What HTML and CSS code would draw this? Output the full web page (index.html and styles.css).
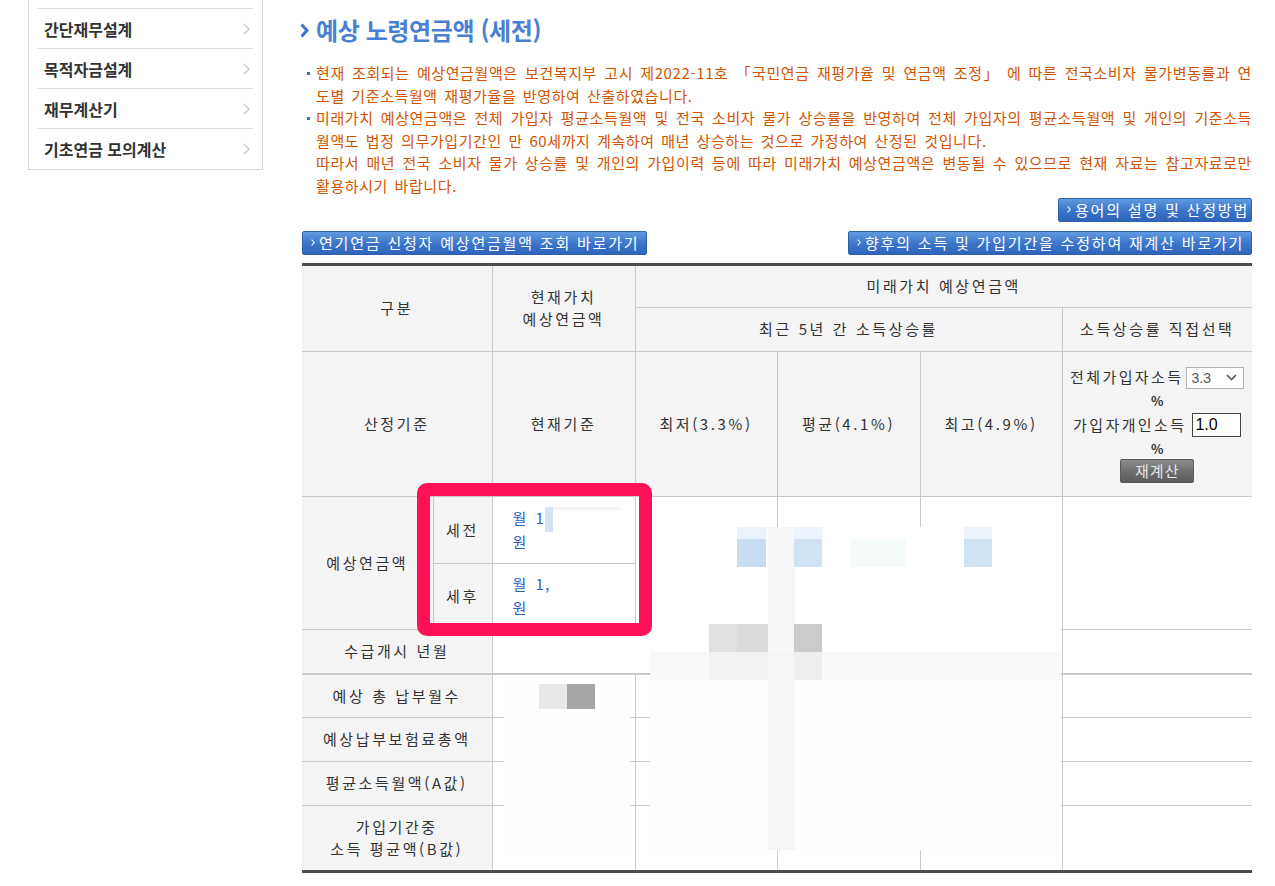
FILE: index.html
```html
<!DOCTYPE html>
<html lang="ko">
<head>
<meta charset="utf-8">
<title>예상 노령연금액 (세전)</title>
<link rel="stylesheet" href="styles.css">
</head>
<body>
<div class="page">
  <aside class="side">
    <a class="side-item">간단재무설계<svg class="side-arr" width="7" height="12" viewBox="0 0 7 12"><polyline points="1,1 6,6 1,11" fill="none" stroke="#c4c4c4" stroke-width="1.2"/></svg></a>
    <a class="side-item">목적자금설계<svg class="side-arr" width="7" height="12" viewBox="0 0 7 12"><polyline points="1,1 6,6 1,11" fill="none" stroke="#c4c4c4" stroke-width="1.2"/></svg></a>
    <a class="side-item">재무계산기<svg class="side-arr" width="7" height="12" viewBox="0 0 7 12"><polyline points="1,1 6,6 1,11" fill="none" stroke="#c4c4c4" stroke-width="1.2"/></svg></a>
    <a class="side-item">기초연금 모의계산<svg class="side-arr" width="7" height="12" viewBox="0 0 7 12"><polyline points="1,1 6,6 1,11" fill="none" stroke="#c4c4c4" stroke-width="1.2"/></svg></a>
  </aside>

  <main class="main">
    <h2 class="title"><svg class="title-arr" width="9" height="15" viewBox="0 0 9 15"><polyline points="1.6,1.6 7,7.5 1.6,13.4" fill="none" stroke="#3b74d2" stroke-width="3" stroke-linejoin="miter"/></svg>예상 노령연금액 (세전)</h2>

    <ul class="notes">
      <li>현재 조회되는 예상연금월액은 보건복지부 고시 제2022-11호 「국민연금 재평가율 및 연금액 조정」 에 따른 전국소비자 물가변동률과 연도별 기준소득월액 재평가율을 반영하여 산출하였습니다.</li>
      <li>미래가치 예상연금액은 전체 가입자 평균소득월액 및 전국 소비자 물가 상승률을 반영하여 전체 가입자의 평균소득월액 및 개인의 기준소득월액도 법정 의무가입기간인 만 60세까지 계속하여 매년 상승하는 것으로 가정하여 산정된 것입니다.<br>따라서 매년 전국 소비자 물가 상승률 및 개인의 가입이력 등에 따라 미래가치 예상연금액은 변동될 수 있으므로 현재 자료는 참고자료로만 활용하시기 바랍니다.</li>
    </ul>

    <div class="btn-row-top">
      <button class="btn btn-terms"><svg class="btn-arr" width="4" height="7" viewBox="0 0 4 7"><polyline points="0.6,0.6 3.2,3.5 0.6,6.4" fill="none" stroke="#fff" stroke-width="1.1"/></svg>용어의 설명 및 산정방법</button>
    </div>
    <div class="btn-row">
      <button class="btn btn-defer"><svg class="btn-arr" width="4" height="7" viewBox="0 0 4 7"><polyline points="0.6,0.6 3.2,3.5 0.6,6.4" fill="none" stroke="#fff" stroke-width="1.1"/></svg>연기연금 신청자 예상연금월액 조회 바로가기</button>
      <button class="btn btn-recalc"><svg class="btn-arr" width="4" height="7" viewBox="0 0 4 7"><polyline points="0.6,0.6 3.2,3.5 0.6,6.4" fill="none" stroke="#fff" stroke-width="1.1"/></svg>향후의 소득 및 가입기간을 수정하여 재계산 바로가기</button>
    </div>

    <div class="tbl-wrap">
      <table class="tbl">
        <colgroup>
          <col class="c-lab"><col class="c-sub"><col class="c-now"><col class="c-f1"><col class="c-f2"><col class="c-f3"><col class="c-pick">
        </colgroup>
        <tr class="r-h1">
          <th colspan="2" rowspan="2">구분</th>
          <th rowspan="2">현재가치<br>예상연금액</th>
          <th colspan="4">미래가치 예상연금액</th>
        </tr>
        <tr class="r-h2">
          <th colspan="3">최근 5년 간 소득상승률</th>
          <th>소득상승률 직접선택</th>
        </tr>
        <tr class="r-base">
          <th colspan="2">산정기준</th>
          <th>현재기준</th>
          <th>최저(3.3%)</th>
          <th>평균(4.1%)</th>
          <th>최고(4.9%)</th>
          <th class="pick">
            <div class="pick-line">전체가입자소득<span class="sel"><select class="sel-box"><option>3.3</option></select><svg class="sel-arr" width="11" height="7" viewBox="0 0 11 7"><polyline points="1,1 5.5,5.5 10,1" fill="none" stroke="#555" stroke-width="1.6"/></svg></span></div>
            <div class="pct">%</div>
            <div class="pick-line">가입자개인소득<input class="rate" type="text" value="1.0"></div>
            <div class="pct">%</div>
            <button class="recalc">재계산</button>
          </th>
        </tr>
        <tr class="r-pre">
          <th rowspan="2">예상연금액</th>
          <th class="sub">세전</th>
          <td class="val">월 1,<br>원</td>
          <td rowspan="2"></td>
          <td rowspan="2"></td>
          <td rowspan="2"></td>
          <td rowspan="2"></td>
        </tr>
        <tr class="r-post">
          <th class="sub">세후</th>
          <td class="val">월 1,<br>원</td>
        </tr>
        <tr class="r-start">
          <th colspan="2">수급개시 년월</th>
          <td colspan="4"></td>
          <td></td>
        </tr>
        <tr class="r-row r-row1">
          <th colspan="2">예상 총 납부월수</th>
          <td></td><td></td><td></td><td></td><td></td>
        </tr>
        <tr class="r-row">
          <th colspan="2">예상납부보험료총액</th>
          <td></td><td></td><td></td><td></td><td></td>
        </tr>
        <tr class="r-row">
          <th colspan="2">평균소득월액(A값)</th>
          <td></td><td></td><td></td><td></td><td></td>
        </tr>
        <tr class="r-last">
          <th colspan="2">가입기간중<br>소득 평균액(B값)</th>
          <td></td><td></td><td></td><td></td><td></td>
        </tr>
      </table>

      <div class="mosaic" aria-hidden="true">
        <div class="m m-hl"></div>
        <div class="m m-hl2"></div>
        <div class="m m-coverA"></div>
        <div class="m m-coverB"></div>
        <div class="m m-band"></div>
        <div class="m m-col"></div>
        <div class="m m-b1t"></div><div class="m m-b1"></div>
        <div class="m m-b2t"></div><div class="m m-b2"></div>
        <div class="m m-b3t"></div><div class="m m-b3"></div>
        <div class="m m-faint"></div>
        <div class="m m-g1"></div><div class="m m-g2"></div><div class="m m-g3"></div><div class="m m-g4"></div>
        <div class="m m-n1"></div><div class="m m-n2"></div>
        <div class="m m-cover2"></div>
        <div class="m m-k1"></div><div class="m m-k2"></div>
      </div>
      <div class="mark" aria-hidden="true"></div>
    </div>
  </main>
</div>
</body>
</html>
```

FILE: styles.css
```css
html, body {
  margin: 0;
  padding: 0;
  background: #fff;
}
body {
  font-family: "Noto Sans CJK KR", "Noto Sans", sans-serif;
  color: #333;
}

.page {
  display: flex;
  align-items: flex-start;
}

/* ---------- sidebar ---------- */
.side {
  width: 235px;
  margin-left: 28px;
  box-sizing: border-box;
  border: 1px solid #d6d6d6;
  border-top: none;
  padding: 8px 9px 1px 8px;
}
.side-item {
  display: flex;
  justify-content: space-between;
  align-items: center;
  height: 40px;
  box-sizing: border-box;
  border-top: 1px solid #dedede;
  padding: 0 3px 0 7px;
  font-size: 16px;
  font-weight: 700;
  letter-spacing: 0;
  color: #333;
}
.side-arr {
  display: block;
}

/* ---------- main ---------- */
.main {
  margin-left: 37px;
  width: 952px;
}
.title {
  margin: 15px 0 0;
  height: 30px;
  display: flex;
  align-items: center;
  font-size: 24px;
  line-height: 30px;
  font-weight: 700;
  color: #4a80d4;
  letter-spacing: -0.4px;
}
.title-arr {
  display: block;
  margin-right: 7px;
  flex: none;
}

.notes {
  margin: 17px 0 0;
  padding: 0;
  list-style: none;
  font-size: 15px;
  line-height: 22.6px;
  color: #d35400;
  letter-spacing: 0.6px;
  word-spacing: 1.75px;
  text-align: justify;
}
.notes li {
  position: relative;
  padding-left: 16px;
}
.notes li::before {
  content: "";
  position: absolute;
  left: 7px;
  top: 10px;
  width: 3px;
  height: 3px;
  background: #3b6fc6;
}

/* ---------- buttons ---------- */
.btn-row-top {
  display: flex;
  justify-content: flex-end;
}
.btn-row {
  display: flex;
  justify-content: space-between;
  margin: 9px 0 0 2px;
}
.btn {
  height: 24px;
  box-sizing: border-box;
  padding: 0 0 0 8px;
  border: 1px solid #2d60ad;
  border-radius: 2px;
  background: linear-gradient(#5f9ae0, #3b74c8 55%, #2e65bb);
  color: #fff;
  font-family: inherit;
  font-size: 15px;
  letter-spacing: 1.8px;
  display: inline-flex;
  align-items: center;
  gap: 4px;
  cursor: pointer;
  white-space: nowrap;
}
.btn-arr {
  display: block;
  flex: none;
}
.btn-terms { width: 194px; }
.btn-defer { width: 345px; }
.btn-recalc { width: 404px; }

/* ---------- table ---------- */
.tbl-wrap {
  position: relative;
  margin: 8px 0 0 2px;
  width: 950px;
}
.tbl {
  width: 950px;
  border-collapse: collapse;
  table-layout: fixed;
  border-top: 3px solid #4d4d4d;
  border-bottom: 3px solid #4d4d4d;
  border-left: hidden;
  border-right: hidden;
  font-size: 15px;
  letter-spacing: 2.6px;
  color: #333;
}
.c-lab { width: 131px; }
.c-sub { width: 59px; }
.c-now { width: 143px; }
.c-f1 { width: 142px; }
.c-f2 { width: 143px; }
.c-f3 { width: 142px; }
.c-pick { width: 190px; }

.tbl th,
.tbl td {
  border: 1px solid #c9c9c9;
  padding: 0;
  text-align: center;
  vertical-align: middle;
  font-weight: 400;
  line-height: 22px;
}
.tbl th {
  background: #f4f4f4;
}
.tbl td {
  background: #fff;
}

.r-h1 { height: 43px; }
.r-h2 { height: 44px; }
.r-base { height: 145px; }
.r-pre { height: 67px; }
.r-post { height: 66px; }
.r-start { height: 45px; }
.r-start th,
.r-start td { border-bottom: 2px solid #c9c9c9; }
.r-row { height: 44px; }
.r-row1 { height: 43px; }
.r-last { height: 66px; }

.tbl td.val {
  text-align: left;
  padding-left: 20px;
  line-height: 24px;
  color: #2c5fc8;
  letter-spacing: 1.5px;
  word-spacing: 2px;
}

/* direct pick cell */
.tbl th.pick {
  letter-spacing: 2.4px;
}
.pick-line {
  display: flex;
  align-items: center;
  justify-content: center;
  gap: 3px;
  height: 24px;
}
.pct {
  height: 24px;
  line-height: 24px;
  font-size: 13px;
  font-weight: 700;
  letter-spacing: 0;
}
.sel {
  position: relative;
  display: block;
  width: 58px;
  height: 22px;
}
.sel-box {
  appearance: none;
  -webkit-appearance: none;
  width: 58px;
  height: 22px;
  box-sizing: border-box;
  border: 1px solid #b4b4b4;
  background: #fff;
  padding: 0 0 0 4px;
  font-family: "Liberation Sans", Arial, sans-serif;
  font-size: 14px;
  color: #555;
  letter-spacing: 0;
}
.sel-arr {
  position: absolute;
  right: 7px;
  top: 8px;
  pointer-events: none;
}
.rate {
  width: 49px;
  height: 24px;
  box-sizing: border-box;
  border: 1px solid #444;
  padding: 0 0 0 2px;
  font-family: "Liberation Sans", Arial, sans-serif;
  font-size: 16px;
  color: #000;
  letter-spacing: 0;
  margin-left: 3px;
}
.recalc {
  display: block;
  margin: -2px auto 0;
  width: 74px;
  height: 24px;
  border: 1px solid #5a5a5a;
  border-radius: 2px;
  background: linear-gradient(#8d8d8d, #6a6a6a 60%, #5c5c5c);
  color: #e6e6e6;
  font-family: inherit;
  font-size: 15px;
  letter-spacing: 1px;
  padding: 0;
}

/* ---------- mosaic (blurred values) ---------- */
.mosaic {
  position: absolute;
  inset: 0;
  pointer-events: none;
}
.m { position: absolute; }
.m-hl { left: 243px; top: 244px; width: 8px; height: 25px; background: #d5e4f5; }
.m-hl2 { left: 251px; top: 244px; width: 67px; height: 3px; background: #f4f4f4; }
.m-coverA { left: 348px; top: 264px; width: 411px; height: 125px; background: #fff; }
.m-coverB { left: 348px; top: 417px; width: 411px; height: 170px; background: #fefefe; }
.m-band { left: 348px; top: 389px; width: 411px; height: 28px; background: #f9f9f9; }
.m-col { left: 466px; top: 264px; width: 27px; height: 323px; background: #f6f6f6; }
.m-b1t { left: 435px; top: 264px; width: 29px; height: 12px; background: #ebf2fb; }
.m-b1 { left: 435px; top: 276px; width: 29px; height: 28px; background: #c9ddf2; }
.m-b2t { left: 492px; top: 264px; width: 28px; height: 12px; background: #edf3fc; }
.m-b2 { left: 492px; top: 276px; width: 28px; height: 28px; background: #d1e2f2; }
.m-b3t { left: 662px; top: 264px; width: 28px; height: 12px; background: #edf3fb; }
.m-b3 { left: 662px; top: 276px; width: 28px; height: 28px; background: #d1e2f2; }
.m-faint { left: 549px; top: 276px; width: 55px; height: 28px; background: #f5fbfb; }
.m-g1 { left: 407px; top: 361px; width: 28px; height: 28px; background: #e1e1e1; }
.m-g2 { left: 435px; top: 361px; width: 31px; height: 28px; background: #dcdcdc; }
.m-g3 { left: 466px; top: 361px; width: 26px; height: 28px; background: #f8f8f8; }
.m-g4 { left: 492px; top: 361px; width: 28px; height: 28px; background: #cbcbcb; }
.m-n1 { left: 407px; top: 389px; width: 59px; height: 28px; background: #f1f1f1; }
.m-n2 { left: 492px; top: 389px; width: 28px; height: 28px; background: #eeeeee; }
.m-cover2 { left: 202px; top: 421px; width: 126px; height: 166px; background: #fefefe; }
.m-k1 { left: 237px; top: 421px; width: 28px; height: 25px; background: #e8e8e8; }
.m-k2 { left: 265px; top: 421px; width: 28px; height: 25px; background: #a6a6a6; }

/* highlight box over the values */
.mark {
  position: absolute;
  left: 115px;
  top: 220px;
  width: 235px;
  height: 153px;
  box-sizing: border-box;
  border: 13px solid #ff1158;
  border-radius: 10px;
  pointer-events: none;
}
```
